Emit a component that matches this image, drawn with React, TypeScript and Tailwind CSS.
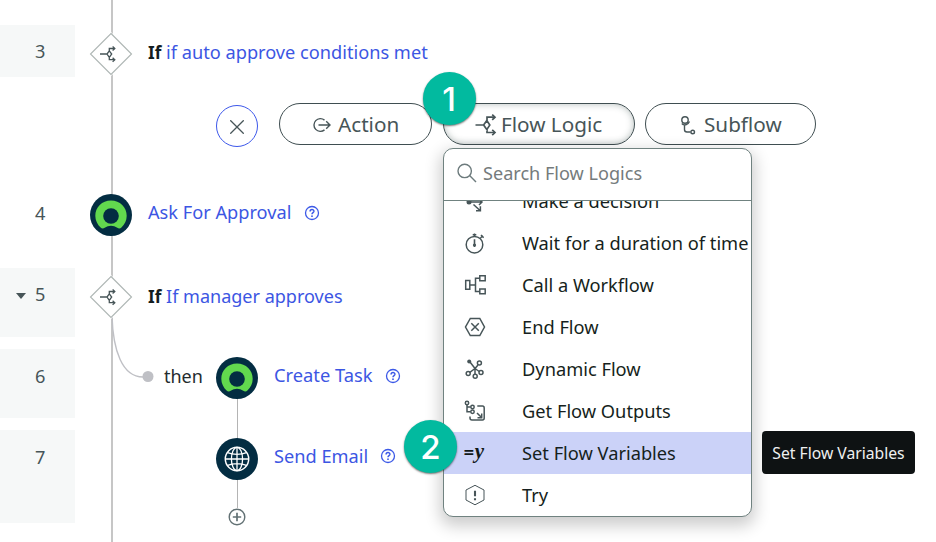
import type { ReactNode } from "react";

const ink = "#475558";

function FlowLogicIcon({ className }: { className: string }) {
  return (
    <svg viewBox="0 0 22 22" className={className} fill="none" stroke={ink} strokeWidth="1.7">
      <path d="M0.5 11H8.3M11.8 6.6L14.8 11L11.8 15.6L8.6 11ZM12 6.5V3.2H19.5M12 15.5V18.5H19.5" />
      <path d="M17.2 .6L20 3.2L17.2 5.8M17.2 15.9L20 18.5L17.2 21.1" />
    </svg>
  );
}

function Diamond() {
  return (
    <svg viewBox="0 0 44 44" className="block size-[44px] shrink-0">
      <path d="M22 0L44 22L22 44L0 22Z" fill="#fff" />
      <path d="M22 1.5L42.5 22L22 42.5L1.5 22Z" fill="#fff" stroke="#adb5b3" strokeWidth="1.1" />
      <g fill="none" stroke={ink} strokeWidth="1.3">
        <path d="M11 22H18M20.3 18.8L22.7 22L20.3 25.3L18 22ZM20.3 18.5V16.5H25.5M20.3 25.5V27.7H25.5" />
        <path d="M23.6 14.5L25.8 16.5L23.6 18.5M23.6 25.7L25.8 27.7L23.6 29.7" />
      </g>
    </svg>
  );
}

function UserBadge() {
  return (
    <svg viewBox="0 0 42 42" className="block size-[42px] shrink-0">
      <circle cx="21" cy="21" r="21" fill="#032d42" />
      <path d="M21 6.5C12 6.5 5.3 13.3 5.3 21.7C5.3 26.4 7.5 30.6 10.6 33.5C11.7 34.6 13.4 34.7 14.7 33.7C18.5 31 23.5 31 27.3 33.7C28.6 34.7 30.3 34.6 31.4 33.5C34.7 30.5 36.7 26.5 36.7 21.7C36.7 13.3 30 6.5 21 6.5Z" fill="#62d84e" />
      <circle cx="21" cy="22" r="7.8" fill="#032d42" />
    </svg>
  );
}

function GlobeBadge() {
  return (
    <svg viewBox="0 0 42 42" className="block size-[42px] shrink-0" fill="none" stroke="#fff" strokeWidth="1.3">
      <circle cx="21" cy="21" r="21" fill="#032d42" stroke="none" />
      <circle cx="21" cy="21" r="11.7" strokeWidth="1.5" />
      <ellipse cx="21" cy="21" rx="5.6" ry="11.7" />
      <path d="M21 9.3V32.7M9.3 21H32.7M11.5 14.7C17 17 25 17 30.5 14.7M11.5 27.3C17 25 25 25 30.5 27.3" />
    </svg>
  );
}

function Help() {
  return (
    <svg viewBox="0 0 16 16" className="block size-[16px]" fill="none" stroke="#3c59e7" strokeWidth="1.3">
      <circle cx="8" cy="8" r="6.5" />
      <path d="M6.1 6.5C6.1 3.9 10 4 9.9 6.4C9.8 7.6 8 7.6 8 9.2" strokeWidth="1.5" />
      <circle cx="8" cy="11.2" r=".9" fill="#3c59e7" stroke="none" />
    </svg>
  );
}

function ItemIcon({ name }: { name: string }) {
  const drawings: Record<string, ReactNode> = {
    decision: (
      <>
        <circle cx="5" cy="12" r="2.5" fill={ink} stroke="none" />
        <path d="M7 12H18M15 9L18 12L15 15M9.5 14.5L16 20.5M12 20.8H16.4V16.2" />
      </>
    ),
    wait: (
      <>
        <circle cx="10.5" cy="12.7" r="8.3" />
        <path d="M10.5 4V1.5M8.7 2.8H12.3M16.4 6L19 3.8M17 3L19.6 5.8" />
        <path d="M10.5 7.2V15" strokeWidth="1.6" />
        <circle cx="10.5" cy="13" r="1.6" fill={ink} stroke="none" />
      </>
    ),
    workflow: <path d="M1.7 6.6H5.8V15.2H1.7ZM15.8 1.8H21.2V6.8H15.8ZM15.8 15H21.2V19.8H15.8ZM5.8 11H11.5M15.8 4.2H11.5V17.5H15.8" />,
    end: <path d="M6.3 2.5H15.8L20.5 11L15.8 19.5H6.3L1.5 11ZM7.3 7.2L14.8 14.8M14.8 7.2L7.3 14.8" />,
    dynamic: (
      <>
        <path d="M6 4L11 10.5L14 7M11 10.5L5.5 14.6M11 10.5V16M11 10.5L15.2 13.5" />
        <circle cx="5.2" cy="3.6" r="2" fill={ink} stroke="none" />
        <circle cx="15.4" cy="5" r="2" />
        <circle cx="4.2" cy="15.4" r="2" />
        <circle cx="11.2" cy="18.2" r="2" />
        <circle cx="17" cy="14.5" r="2" />
      </>
    ),
    outputs: (
      <>
        <circle cx="3" cy="3" r="1.7" />
        <circle cx="8.5" cy="7" r="1.7" />
        <circle cx="8.5" cy="11.8" r="1.7" />
        <path d="M3 5V11.8H6.7M3 7H6.7M13.3 6H18.5Q20.2 6 20.2 8V18Q20.2 20 18.5 20H8Q6 20 6 18V16.5M13 13L17.3 17.3M13.5 17.7H17.7V13.5" />
      </>
    ),
    try: (
      <>
        <path d="M11 1.3L20 6V16L11 20.8L2 16V6Z" strokeWidth="1" />
        <path d="M11 6.7V12.3M11 14.2V16.3" strokeWidth="2.1" />
      </>
    ),
  };
  return (
    <svg viewBox="0 0 22 22" className="block size-[22px]" fill="none" stroke={ink} strokeWidth="1.5">
      {drawings[name]}
    </svg>
  );
}

const items = [
  { icon: "decision", label: "Make a decision" },
  { icon: "wait", label: "Wait for a duration of time" },
  { icon: "workflow", label: "Call a Workflow" },
  { icon: "end", label: "End Flow" },
  { icon: "dynamic", label: "Dynamic Flow" },
  { icon: "outputs", label: "Get Flow Outputs" },
  { icon: "set", label: "Set Flow Variables" },
  { icon: "try", label: "Try" },
];

function Gutter({ n, shaded, className, arrow }: { n: number; shaded?: boolean; className: string; arrow?: boolean }) {
  return (
    <div className={`relative w-[75px] shrink-0 pl-[35px] text-[18.2px] leading-6 text-[#475558] ${shaded ? "bg-[#f6f8f8]" : ""} ${className}`}>
      {arrow && <span className="absolute left-[16px] top-[25px] border-x-[5px] border-t-[6px] border-x-transparent border-t-[#475558]" />}
      {n}
    </div>
  );
}

function FlowMenu() {
  return (
    <div className="absolute left-[443px] top-[148px] flex h-[369px] w-[309px] flex-col overflow-hidden rounded-[10px] border-[1.5px] border-[#708280] bg-white shadow-[0_6px_16px_3px_rgba(0,0,0,0.2)]">
      <div className="flex h-[52px] shrink-0 items-center border-b border-[#708280] pl-[13px] text-[#757b7c]">
        <svg viewBox="0 0 20 20" className="mt-[-4px] size-[20px]" fill="none" stroke="#6d7b7d" strokeWidth="1.4">
          <circle cx="7.7" cy="7.9" r="6.7" />
          <path d="M12.6 12.6L19 19" />
        </svg>
        <span className="-mt-[3px] ml-[6px] text-[18.1px]">Search Flow Logics</span>
      </div>
      <div className="min-h-0 flex-1 overflow-hidden">
        <div className="-mt-[21px]">
          {items.map((item) => (
            <div key={item.label} className={`flex h-[42px] items-center whitespace-nowrap pl-[20px] text-[#161f20] ${item.icon === "set" ? "bg-[#cbd2f8]" : ""}`}>
              <span className="flex w-[58px] items-center">
                {item.icon === "set" ? (
                  <span className="flex items-center leading-5 text-[#111819]">
                    <span className="-ml-[1px] -mt-[3px] font-['DejaVu_Sans',sans-serif] text-[14px] font-bold">=</span>
                    <span className="-mt-[5px] font-['Liberation_Serif',serif] text-[21px] font-bold italic">y</span>
                  </span>
                ) : (
                  <ItemIcon name={item.icon} />
                )}
              </span>
              <span className="text-[18.25px]">{item.label}</span>
            </div>
          ))}
        </div>
      </div>
    </div>
  );
}

function StepMarker({ n, className }: { n: number; className: string }) {
  return (
    <div className={`absolute flex size-[53px] items-center justify-center rounded-full bg-[#02ba9f] pt-[1px] font-['Inter',sans-serif] text-[33px] font-medium leading-none text-white shadow-[0_1px_2px_rgba(0,0,0,0.55)] ${className}`}>
      {n}
    </div>
  );
}

const pill = "flex h-[42px] items-center rounded-full border-[1.5px] border-[#3f4e51] bg-white pb-[1px] text-[20.7px] text-[#475558]";

export default function App() {
  return (
    <div className="relative h-[542px] w-[936px] overflow-hidden bg-white pt-[25px] font-['Noto_Sans',sans-serif] text-[18.2px] leading-6">
      <svg viewBox="0 0 936 542" className="pointer-events-none absolute inset-0 h-[542px] w-[936px]" fill="none">
        <path d="M112 0V542" stroke="#c6c6c6" strokeWidth="2" />
        <path d="M112 316C113 350 122 377 143 377" stroke="#bfc0c5" strokeWidth="1.4" />
        <circle cx="148" cy="376.5" r="5.5" fill="#bfc0c5" />
        <path d="M237.5 390V508" stroke="#b4b4b4" strokeWidth="1" />
      </svg>

      <div className="relative flex h-[52px]">
        <Gutter n={3} shaded className="pt-[14px]" />
        <div className="flex items-center pl-[14px] text-[#3c56e3]">
          <div className="mt-[5px]"><Diamond /></div>
          <p className="ml-[15px] mt-[2px]"><b className="text-[17.2px] text-[#141d1e]">If</b> if auto approve conditions met</p>
        </div>
      </div>

      <div className="relative flex h-[113px] items-start pl-[216px] pt-[26px]">
        <button className="mt-[2px] flex size-[42px] items-center justify-center rounded-full border-[1.5px] border-[#3d58ea] bg-white">
          <svg viewBox="0 0 14 14" className="mt-[2px] size-[14px]" stroke="#475558" strokeWidth="1.3"><path d="M.3 .3L13.7 13.7M13.7 .3L.3 13.7" /></svg>
        </button>
        <button className={`${pill} ml-[21px] w-[153px] pl-[32px]`}>
          <svg viewBox="0 0 20 16" className="mr-[6px] mt-[3px] h-[16px] w-[20px]" fill="none" stroke="#475558" strokeWidth="1.4">
            <path d="M12.5 3.1A6.4 6.4 0 1 0 12.5 12.9M6.5 8H18M14.2 4.2L18 8L14.2 11.8" />
          </svg>
          Action
        </button>
        <button className={`${pill} ml-[11px] w-[192px] pl-[31px] shadow-[inset_0_0_7px_rgba(40,65,60,0.35)]`}>
          <FlowLogicIcon className="mr-[4px] mt-[3px] size-[22px]" />
          Flow Logic
        </button>
        <button className={`${pill} ml-[10px] w-[171px] pl-[34px]`}>
          <svg viewBox="0 0 16 20" className="mr-[8px] mt-[3px] h-[20px] w-[16px]" fill="none" stroke="#475558" strokeWidth="1.4">
            <circle cx="5" cy="5" r="3.2" /><path d="M1.8 8.5C4 11 8 10 9.5 6.5M4.5 10V14.5Q4.5 17 7 17H10.5" /><circle cx="12.7" cy="17" r="1.8" />
          </svg>
          Subflow
        </button>
      </div>

      <div className="relative flex h-[78px]">
        <Gutter n={4} className="pt-[11px]" />
        <div className="flex h-[50px] items-center pl-[15px] text-[#3c56e3]">
          <UserBadge />
          <span className="-mt-[6px] ml-[16px] mr-[13px]">Ask For Approval</span>
          <div className="-mt-[5px]"><Help /></div>
        </div>
      </div>

      <div className="relative mb-[12px] flex h-[69px]">
        <Gutter n={5} shaded arrow className="pt-[14px]" />
        <div className="flex h-[57px] items-center pl-[14px] text-[#3c56e3]">
          <Diamond />
          <p className="-mt-[1px] ml-[15px] text-[18.05px]"><b className="text-[17.2px] text-[#141d1e]">If</b> If manager approves</p>
        </div>
      </div>

      <div className="relative mb-[12px] flex h-[69px]">
        <Gutter n={6} shaded className="pt-[15px]" />
        <div className="flex h-[58px] items-center pl-[89px] text-[#3c56e3]">
          <span className="-mt-[5px] w-[52px] text-[18px] text-[#242c2e]">then</span>
          <UserBadge />
          <span className="-mt-[7px] ml-[16px] mr-[13px] text-[18.3px]">Create Task</span>
          <div className="-mt-[5px]"><Help /></div>
        </div>
      </div>

      <div className="relative flex h-[93px]">
        <Gutter n={7} shaded className="pt-[15px]" />
        <div className="flex flex-col pl-[141px] text-[#3c56e3]">
          <div className="flex h-[58px] shrink-0 items-center">
            <GlobeBadge />
            <span className="-mt-[6px] ml-[16px] mr-[12px]">Send Email</span>
            <div className="-mt-[6px]"><Help /></div>
          </div>
          <svg viewBox="0 0 18 18" className="ml-[12px] mt-[20px] size-[18px] shrink-0" fill="#fff" stroke="#627174" strokeWidth="1.4">
            <circle cx="9" cy="9" r="7.8" /><path d="M9 4.8V13.2M4.8 9H13.2" strokeWidth="1.7" />
          </svg>
        </div>
      </div>

      <FlowMenu />
      <StepMarker n={1} className="left-[422.5px] top-[72px]" />
      <StepMarker n={2} className="left-[404px] top-[420px]" />
      <div role="tooltip" className="absolute left-[762px] top-[431px] flex h-[43px] w-[153px] items-center justify-center whitespace-nowrap rounded-[4px] bg-[#0e1213] text-[15.7px] text-[#eef0f0]">
        Set Flow Variables
      </div>
    </div>
  );
}
